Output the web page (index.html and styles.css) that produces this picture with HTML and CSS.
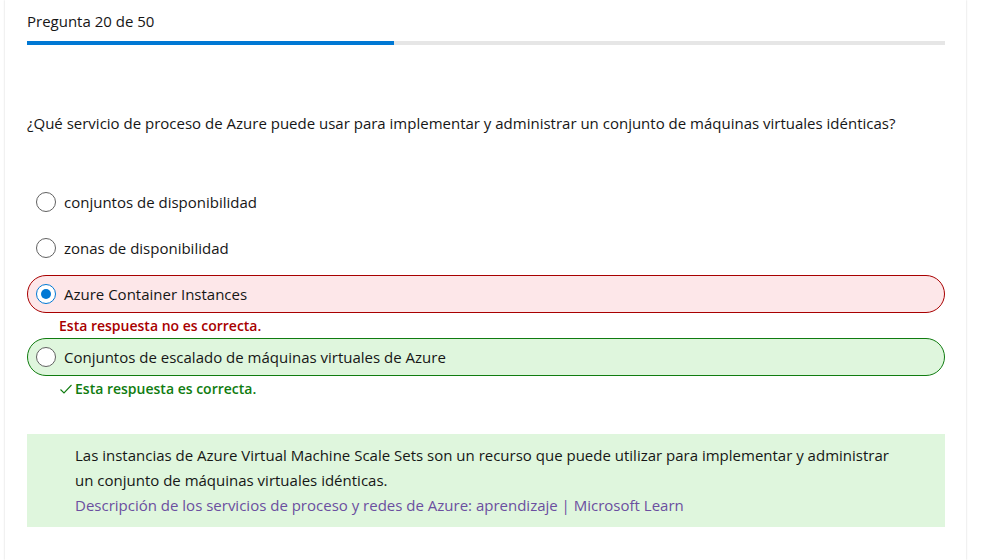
FILE: index.html
```html
<!DOCTYPE html>
<html lang="es">
<head>
<meta charset="utf-8">
<title>Pregunta 20 de 50</title>
<link rel="stylesheet" href="styles.css">
</head>
<body>
<div class="card">
  <div class="counter">Pregunta 20 de 50</div>
  <div class="progress"><div class="progress-fill" style="width:40%"></div></div>

  <p class="question">¿Qué servicio de proceso de Azure puede usar para implementar y administrar un conjunto de máquinas virtuales idénticas?</p>

  <div class="options">
    <label class="option">
      <span class="radio"></span>
      <span class="label">conjuntos de disponibilidad</span>
    </label>
    <label class="option">
      <span class="radio"></span>
      <span class="label">zonas de disponibilidad</span>
    </label>
    <label class="option wrong">
      <span class="radio checked"></span>
      <span class="label">Azure Container Instances</span>
    </label>
    <div class="feedback feedback-wrong">Esta respuesta no es correcta.</div>
    <label class="option right">
      <span class="radio"></span>
      <span class="label">Conjuntos de escalado de máquinas virtuales de Azure</span>
    </label>
    <div class="feedback feedback-right"><svg class="check" width="14" height="14" viewBox="0 0 14 14"><path d="M1.5 7.5 L5 11 L12.5 3" fill="none" stroke="#107c10" stroke-width="1.1"/></svg>Esta respuesta es correcta.</div>
  </div>

  <div class="explanation">
    <p>Las instancias de Azure Virtual Machine Scale Sets son un recurso que puede utilizar para implementar y administrar un conjunto de máquinas virtuales idénticas.</p>
    <a class="ref" href="#">Descripción de los servicios de proceso y redes de Azure: aprendizaje | Microsoft Learn</a>
  </div>
</div>
</body>
</html>
```

FILE: styles.css
```css
html, body {
  margin: 0;
  padding: 0;
  background: #ffffff;
}
body {
  font-family: "Open Sans", "Noto Sans", "Liberation Sans", sans-serif;
  color: #161616;
  font-size: 15px;
}
.card {
  margin-left: 5px;
  width: 918px;
  min-height: 549px;
  padding: 11px 21px 0 22px;
  box-shadow: 0 0 2px rgba(0, 0, 0, 0.18);
  background: #fff;
}
.counter {
  font-size: 15px;
  line-height: 20px;
}
.progress {
  margin-top: 10px;
  height: 4px;
  background: #e6e6e6;
}
.progress-fill {
  height: 100%;
  background: #0078d4;
}
.question {
  margin: 66px 0 0 0;
  font-size: 15px;
  line-height: 24px;
}
.options {
  margin-top: 48px;
  display: flex;
  flex-direction: column;
}
.option {
  display: flex;
  align-items: center;
  height: 38px;
  box-sizing: border-box;
  padding-left: 8px;
  border: 1px solid transparent;
  border-radius: 19px;
  margin-bottom: 8px;
  font-size: 15px;
}
.option .radio {
  width: 20px;
  height: 20px;
  box-sizing: border-box;
  border: 1px solid #616161;
  border-radius: 50%;
  background: #fff;
  margin-right: 8px;
  display: flex;
  align-items: center;
  justify-content: center;
}
.option .radio.checked {
  border-color: #0078d4;
}
.option .radio.checked::after {
  content: "";
  width: 10px;
  height: 10px;
  border-radius: 50%;
  background: #0078d4;
}
.option.wrong {
  background: #fde7e9;
  border-color: #a80000;
  margin-bottom: 0;
}
.option.right {
  background: #dff6dd;
  border-color: #107c10;
  margin-bottom: 0;
}
.feedback {
  padding-left: 32px;
  font-size: 14px;
  font-weight: 600;
  line-height: 25px;
  display: flex;
  align-items: center;
}
.feedback-wrong {
  color: #a80000;
}
.feedback-right {
  color: #107c10;
}
.check {
  margin-right: 2px;
}
.explanation {
  margin-top: 33px;
  background: #dff6dd;
  padding: 9px 48px 9px 48px;
  font-size: 15px;
  line-height: 25px;
}
.explanation p {
  margin: 0;
  max-width: 822px;
}
.ref {
  color: #6b4fa0;
  text-decoration: none;
}
```
